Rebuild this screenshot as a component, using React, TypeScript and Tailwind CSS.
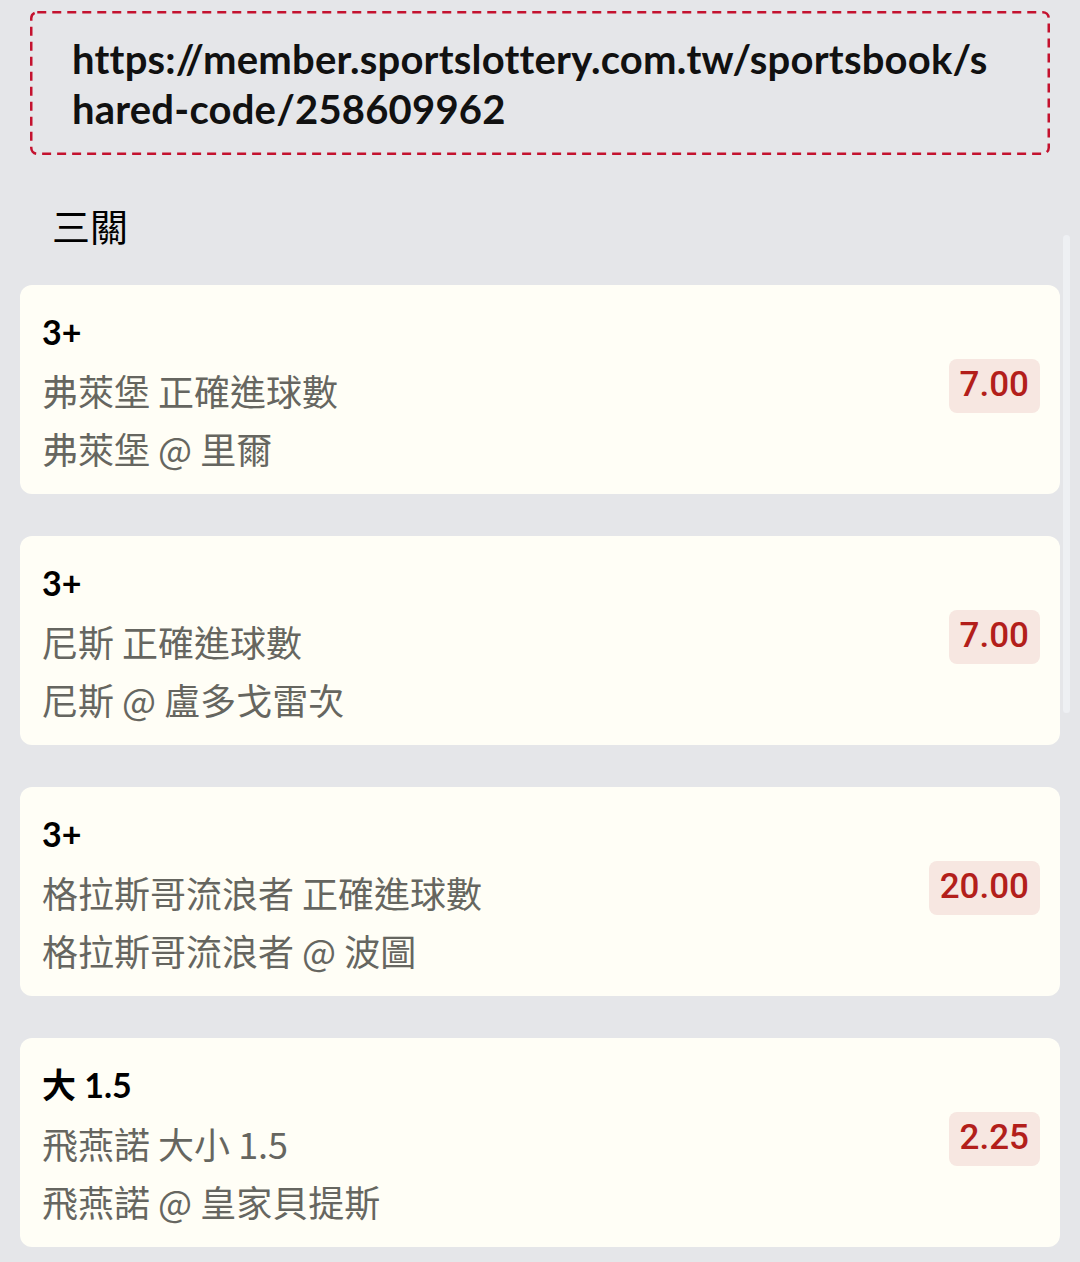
import React from 'react';

interface Leg {
  pick: string;
  market: string;
  match: string;
  odds: string;
}

const legs: Leg[] = [
  { pick: '3+', market: '弗萊堡 正確進球數', match: '弗萊堡 @ 里爾', odds: '7.00' },
  { pick: '3+', market: '尼斯 正確進球數', match: '尼斯 @ 盧多戈雷次', odds: '7.00' },
  { pick: '3+', market: '格拉斯哥流浪者 正確進球數', match: '格拉斯哥流浪者 @ 波圖', odds: '20.00' },
  { pick: '大 1.5', market: '飛燕諾 大小 1.5', match: '飛燕諾 @ 皇家貝提斯', odds: '2.25' },
];

const latin = "font-['Lato','Noto_Sans_CJK_TC',sans-serif]";
const cjk = "font-['Noto_Sans_CJK_TC','Noto_Sans',sans-serif]";

function LegCard({ leg }: { leg: Leg }) {
  return (
    <div className="bg-[#fffef6] rounded-xl pl-[22px] pr-5 pt-[18px] pb-[17px] flex items-center">
      <div className="flex-1 min-w-0">
        <div className={`${latin} text-[34px] leading-[58px] font-bold text-black`}>{leg.pick}</div>
        <div className={`${cjk} text-[36px] leading-[58px] text-[#666660]`}>{leg.market}</div>
        <div className={`${cjk} text-[36px] leading-[58px] text-[#666660]`}>{leg.match}</div>
      </div>
      <div className="font-['Roboto',sans-serif] -mt-[9px] bg-[#f7e7e1] text-[#b31f1b] rounded-lg px-[11px] h-[54px] flex items-center text-[35px] font-medium">
        {leg.odds}
      </div>
    </div>
  );
}

export default function App() {
  return (
    <div className="min-h-[1262px] bg-[#e5e6e9] px-5 pt-[11px] pb-4 relative">
      {/* shared link */}
      <div className="relative mx-[10px] rounded-md pl-[42px] pr-[50px] pt-[23px] pb-[21px]">
        <svg className="absolute inset-0 w-full h-full pointer-events-none" preserveAspectRatio="none">
          <rect
            x="1.25"
            y="1.25"
            width="calc(100% - 2.5px)"
            height="calc(100% - 2.5px)"
            rx="6"
            fill="none"
            stroke="#c4122f"
            strokeWidth="2.5"
            strokeDasharray="9 6"
          />
        </svg>
        <div className={`${latin} break-all text-[40px] leading-[50px] tracking-[0.2px] font-bold text-[#111]`}>
          https://member.sportslottery.com.tw/sportsbook/shared-code/258609962
        </div>
      </div>

      <h2 className={`${cjk} pl-8 mt-[46px] mb-[36px] text-[38px] leading-[48px] text-black`}>三關</h2>

      <div className="flex flex-col gap-[42px]">
        {legs.map((leg, i) => (
          <LegCard key={i} leg={leg} />
        ))}
      </div>

      {/* scroll indicator */}
      <div className="absolute right-[10px] top-[235px] w-[7px] h-[478px] rounded-full bg-[#eef0f3]" />
    </div>
  );
}
